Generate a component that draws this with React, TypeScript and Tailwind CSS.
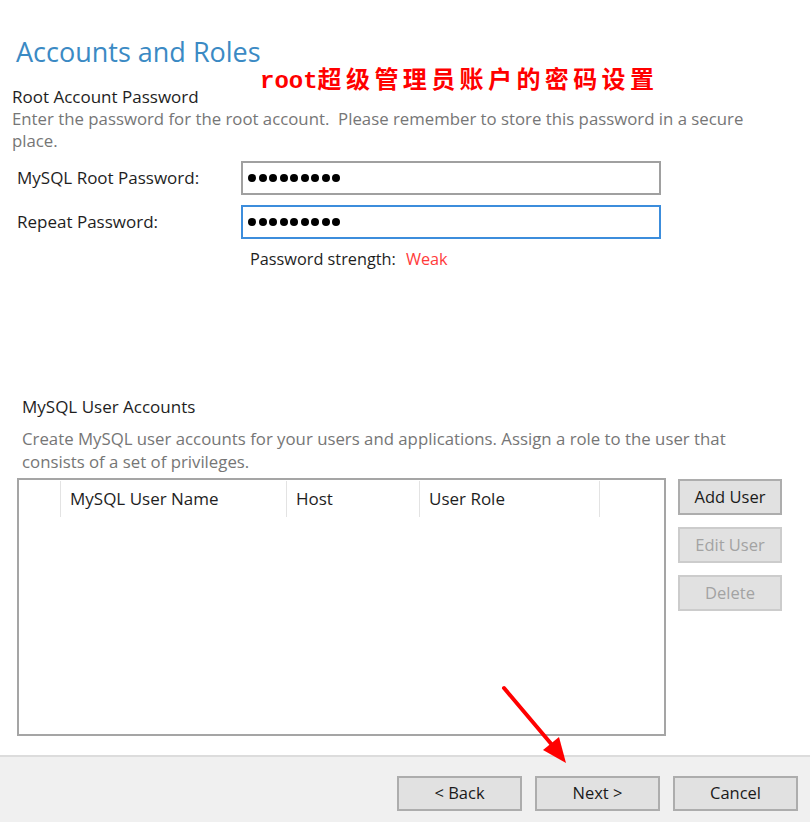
import React from 'react';

const font = { fontFamily: '"Open Sans", "Noto Sans", sans-serif' };

const Dots: React.FC = () => (
  <div className="flex gap-[2.5px] items-center">
    {Array.from({ length: 9 }).map((_, i) => (
      <span key={i} className="w-2 h-2 rounded-full bg-black" />
    ))}
  </div>
);

const WinButton: React.FC<{ label: string; disabled?: boolean; className?: string }> = ({ label, disabled, className }) => (
  <button
    className={
      'border-2 bg-[#e1e1e1] text-[16.5px] leading-none flex items-center justify-center ' +
      (disabled ? 'border-[#cccccc] text-[#a3a3a3] ' : 'border-[#adadad] text-[#1a1a1a] ') +
      (className ?? '')
    }
  >
    {label}
  </button>
);

export default function App() {
  return (
    <div className="relative w-[810px] h-[822px] bg-white flex flex-col overflow-hidden" style={font}>
      {/* page content */}
      <div className="flex-1">
        <h1 className="ml-[16px] mt-[36px] text-[27px] leading-[32px] text-[#3b8ac4]">Accounts and Roles</h1>

        <div className="ml-[12px] mt-[18px]">
          <h2 className="text-[17px] leading-[22px] text-[#1e1e1e]">Root Account Password</h2>
          <p className="text-[16.8px] leading-[22px] text-[#767676]">
            Enter the password for the root account.&nbsp; Please remember to store this password in a secure
            <br />
            place.
          </p>
        </div>

        <div className="mt-[9px] ml-[17px] flex flex-col gap-[10px]">
          <div className="flex items-center">
            <label className="w-[224px] text-[17px] text-[#1e1e1e]">MySQL Root Password:</label>
            <div className="w-[420px] h-[34px] border-2 border-[#a0a0a0] px-[5px] flex items-center">
              <Dots />
            </div>
          </div>
          <div className="flex items-center">
            <label className="w-[224px] text-[17px] text-[#1e1e1e]">Repeat Password:</label>
            <div className="w-[420px] h-[34px] border-2 border-[#3c8ddc] px-[5px] flex items-center">
              <Dots />
            </div>
          </div>
        </div>

        <div className="ml-[250px] mt-[9px] text-[16.3px] leading-[22px] flex gap-[10px]">
          <span className="text-[#1e1e1e]">Password strength:</span>
          <span className="text-[#ff3b3b]">Weak</span>
        </div>

        <div className="ml-[22px] mt-[126px]">
          <h2 className="text-[17px] leading-[22px] text-[#1e1e1e]">MySQL User Accounts</h2>
          <p className="mt-[9px] text-[16.8px] leading-[23px] text-[#767676]">
            Create MySQL user accounts for your users and applications. Assign a role to the user that
            <br />
            consists of a set of privileges.
          </p>
        </div>

        <div className="ml-[17px] mt-[5px] flex gap-[12px]">
          <div className="w-[649px] h-[258px] border-2 border-[#a5a5a5] bg-white">
            <div className="flex h-[36px] mt-[1px] text-[17px] text-[#1e1e1e]">
              <div className="w-[42px] border-r border-[#e3e3e3]" />
              <div className="w-[226px] border-r border-[#e3e3e3] pl-[9px] flex items-center">MySQL User Name</div>
              <div className="w-[133px] border-r border-[#e3e3e3] pl-[9px] flex items-center">Host</div>
              <div className="w-[180px] border-r border-[#e3e3e3] pl-[9px] flex items-center">User Role</div>
            </div>
          </div>
          <div className="flex flex-col gap-[12px] pt-[1px]">
            <WinButton label="Add User" className="w-[104px] h-[36px]" />
            <WinButton label="Edit User" disabled className="w-[104px] h-[36px]" />
            <WinButton label="Delete" disabled className="w-[104px] h-[36px]" />
          </div>
        </div>
      </div>

      {/* footer */}
      <div className="h-[67px] border-t-2 border-[#dcdcdc] bg-[#f0f0f0] flex justify-end items-start gap-[13px] pr-[12px] pt-[19px]">
        <WinButton label="< Back" className="w-[125px] h-[35px]" />
        <WinButton label="Next >" className="w-[125px] h-[35px]" />
        <WinButton label="Cancel" className="w-[125px] h-[35px]" />
      </div>

      {/* red annotation */}
      <div className="absolute left-[260px] top-[62px] text-[24px] leading-[32px] font-bold text-[#ff0000] flex items-baseline">
        <span style={{ fontFamily: '"Liberation Mono", monospace' }}>root</span>
        <span className="tracking-[4.4px]" style={{ fontFamily: '"Noto Sans CJK SC", sans-serif' }}>
          超级管理员账户的密码设置
        </span>
      </div>

      <svg className="absolute left-0 top-0 pointer-events-none" width="810" height="822">
        <line x1="504" y1="688" x2="553" y2="746" stroke="#ff0000" strokeWidth="4" strokeLinecap="round" />
        <polygon points="543,750 566,763 559,737" fill="#ff0000" />
      </svg>
    </div>
  );
}
